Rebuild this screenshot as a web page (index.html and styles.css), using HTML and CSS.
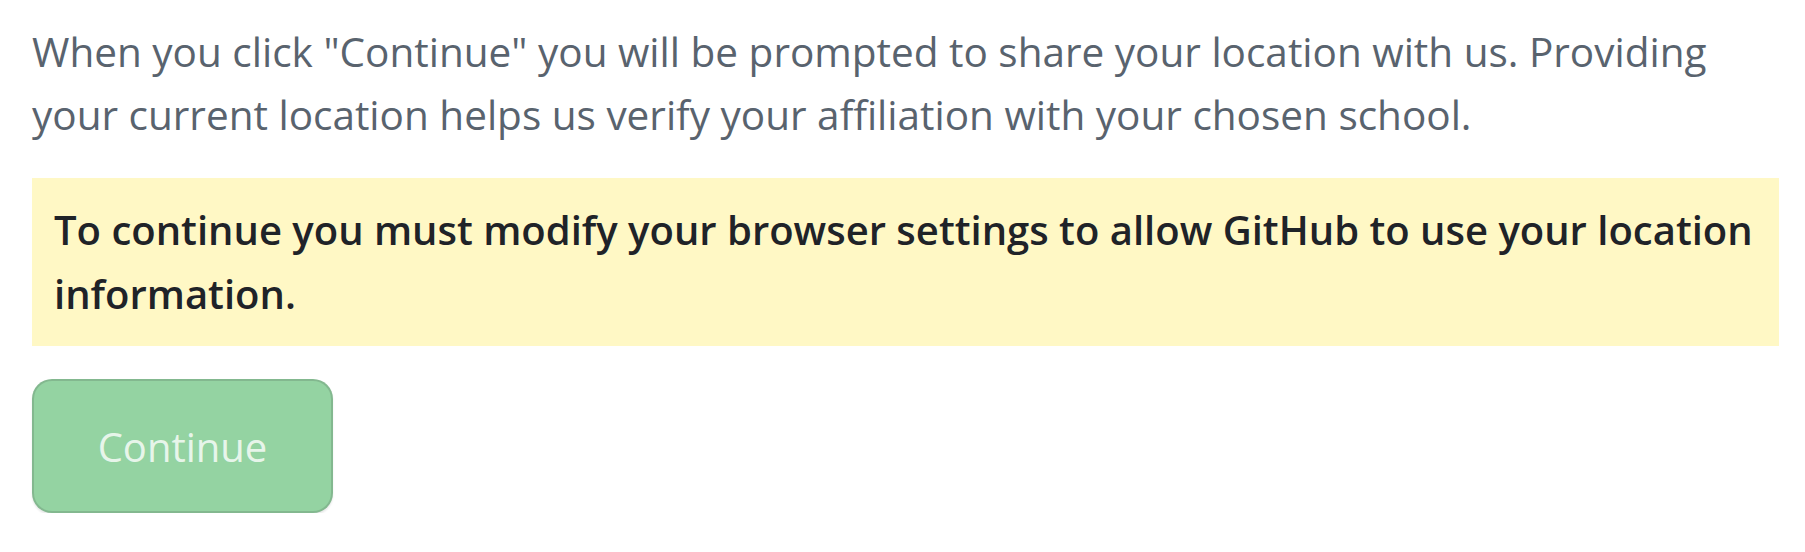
FILE: index.html
```html
<!DOCTYPE html>
<html lang="en">
<head>
<meta charset="utf-8">
<title>Location</title>
<link rel="stylesheet" href="styles.css">
</head>
<body>
<main class="page">
  <p class="intro">When you click "Continue" you will be prompted to share your location with us. Providing your current location helps us verify your affiliation with your chosen school.</p>
  <div class="flash-warn">To continue you must modify your browser settings to allow GitHub to use your location information.</div>
  <button class="btn-continue" type="button" disabled>Continue</button>
</main>
</body>
</html>
```
FILE: styles.css
```css
html, body {
  margin: 0;
  padding: 0;
  background: #ffffff;
}
body {
  font-family: "Open Sans", "Noto Sans", sans-serif;
}
.page {
  display: flex;
  flex-direction: column;
  align-items: flex-start;
  padding: 20px 26px 0 32px;
}
.intro {
  margin: 0 0 32px 0;
  font-size: 40.5px;
  line-height: 63px;
  color: #59636e;
}
.flash-warn {
  align-self: stretch;
  background: #fff8c5;
  padding: 20px 22px;
  font-size: 40px;
  line-height: 64px;
  font-weight: 600;
  color: #1f2328;
}
.btn-continue {
  margin-top: 33px;
  width: 301px;
  height: 134px;
  padding: 0;
  border-radius: 20px;
  border: 2px solid rgba(31, 35, 40, 0.15);
  background: #94d3a2;
  color: rgba(255, 255, 255, 0.8);
  font-family: "Open Sans", "Noto Sans", sans-serif;
  font-size: 40px;
  box-shadow: 0 2px 2px rgba(31, 35, 40, 0.1);
}
```
